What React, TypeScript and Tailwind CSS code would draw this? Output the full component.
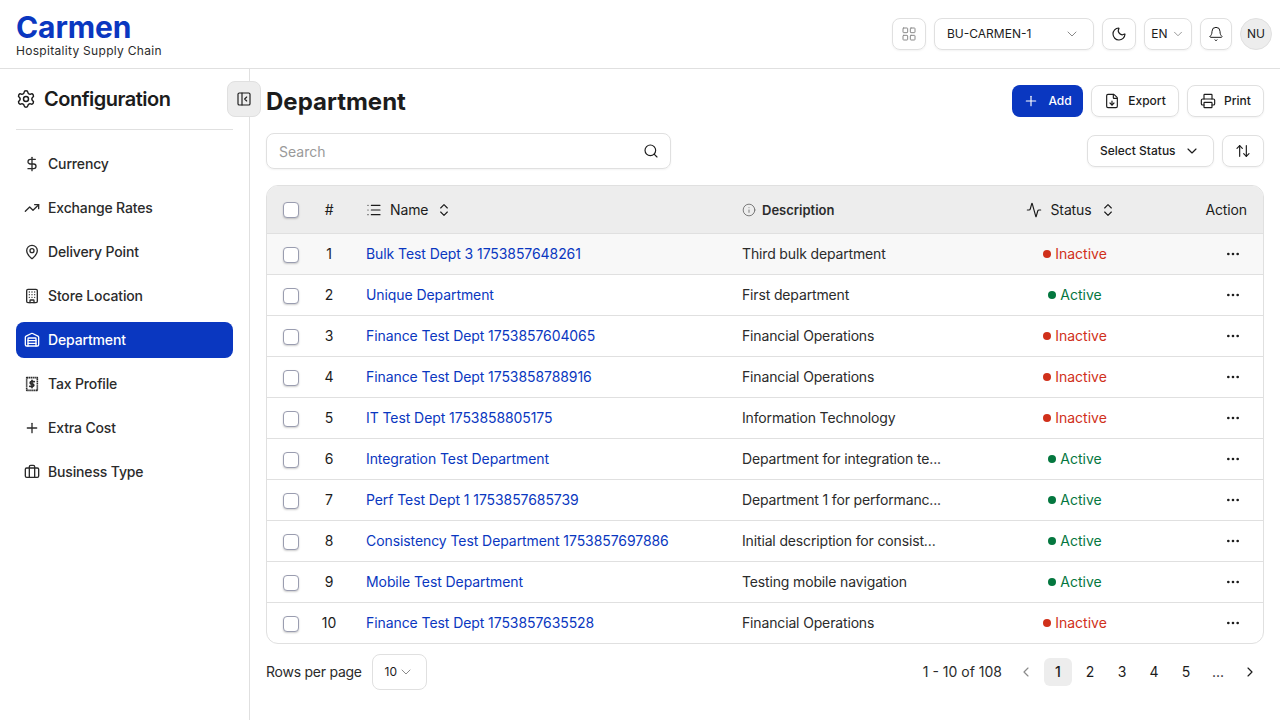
import {
  Activity,
  ArrowUpDown,
  Bell,
  Briefcase,
  Building,
  ChevronDown,
  ChevronLeft,
  ChevronRight,
  ChevronsUpDown,
  DollarSign,
  Ellipsis,
  FileDown,
  Info,
  LayoutGrid,
  List,
  MapPin,
  Moon,
  PanelLeftClose,
  Plus,
  Printer,
  Search,
  Settings,
  TrendingUp,
  Warehouse,
} from "lucide-react";

const TaxIcon = ({ className }: { className?: string }) => (
  <svg viewBox="0 0 24 24" fill="none" stroke="currentColor" strokeWidth="2.4" strokeLinejoin="round" className={className}>
    <path d="M4 2.5h16v19H4z" strokeDasharray="2.2 0.7" />
    <path d="M15.5 8.5H11a1.75 1.75 0 0 0 0 3.5h2a1.75 1.75 0 0 1 0 3.5H8.5" strokeLinecap="round" />
    <path d="M12 6.5v11" strokeLinecap="round" />
  </svg>
);

const navItems = [
  { label: "Currency", icon: DollarSign },
  { label: "Exchange Rates", icon: TrendingUp },
  { label: "Delivery Point", icon: MapPin },
  { label: "Store Location", icon: Building },
  { label: "Department", icon: Warehouse, active: true },
  { label: "Tax Profile", icon: TaxIcon },
  { label: "Extra Cost", icon: Plus },
  { label: "Business Type", icon: Briefcase },
];

const rows = [
  { name: "Bulk Test Dept 3 1753857648261", desc: "Third bulk department", active: false },
  { name: "Unique Department", desc: "First department", active: true },
  { name: "Finance Test Dept 1753857604065", desc: "Financial Operations", active: false },
  { name: "Finance Test Dept 1753858788916", desc: "Financial Operations", active: false },
  { name: "IT Test Dept 1753858805175", desc: "Information Technology", active: false },
  { name: "Integration Test Department", desc: "Department for integration te...", active: true },
  { name: "Perf Test Dept 1 1753857685739", desc: "Department 1 for performanc...", active: true },
  { name: "Consistency Test Department 1753857697886", desc: "Initial description for consist...", active: true },
  { name: "Mobile Test Department", desc: "Testing mobile navigation", active: true },
  { name: "Finance Test Dept 1753857635528", desc: "Financial Operations", active: false },
];

const Checkbox = () => (
  <span className="block h-4 w-4 translate-y-[1px] rounded-[4px] border border-[#9a9db0] bg-white shadow-[0_1px_2px_rgba(0,0,0,0.2)]" />
);

export default function App() {
  return (
    <div className="flex h-[720px] w-[1280px] flex-col overflow-hidden bg-white font-['Inter',sans-serif] text-[#1c1c1c]">
      <header className="flex h-[69px] shrink-0 items-center justify-between border-b border-[#e0e0e0] pl-4 pr-2">
        <div className="mt-[2px]">
          <div className="text-[30px] leading-[30px] font-bold tracking-[-0.1px] text-[#0a37c0]">Carmen</div>
          <div className="mt-[1px] text-xs leading-4 tracking-[0.3px] text-[#2b2b2b]">Hospitality Supply Chain</div>
        </div>
        <div className="flex items-center gap-2">
          <button className="flex h-8 w-[34px] items-center justify-center rounded-lg border border-[#e0e0e0] shadow-[0_1px_2px_rgba(0,0,0,0.05)]">
            <LayoutGrid className="h-4 w-4 text-[#8a8a8a]" strokeWidth={1.5} />
          </button>
          <button className="flex h-8 w-[160px] items-center justify-between rounded-lg border border-[#e0e0e0] pl-3 pr-[13px] text-xs shadow-[0_1px_2px_rgba(0,0,0,0.05)]">
            BU-CARMEN-1
            <ChevronDown className="h-4 w-4 text-[#8a8a8a]" strokeWidth={1.5} />
          </button>
          <button className="flex h-8 w-[34px] items-center justify-center rounded-lg border border-[#e0e0e0] shadow-[0_1px_2px_rgba(0,0,0,0.05)]">
            <Moon className="h-4 w-4" strokeWidth={1.75} />
          </button>
          <button className="flex h-8 w-12 items-center justify-center gap-[3px] rounded-lg border border-[#e0e0e0] text-xs shadow-[0_1px_2px_rgba(0,0,0,0.05)]">
            EN
            <ChevronDown className="h-3.5 w-3.5 text-[#8a8a8a]" strokeWidth={1.5} />
          </button>
          <button className="flex h-8 w-8 items-center justify-center rounded-lg border border-[#e0e0e0] shadow-[0_1px_2px_rgba(0,0,0,0.05)]">
            <Bell className="h-4 w-4" strokeWidth={1.5} />
          </button>
          <div className="flex h-8 w-8 items-center justify-center rounded-full border border-[#e0e0e0] bg-[#ededed] text-xs">NU</div>
        </div>
      </header>

      <div className="flex min-h-0 flex-1">
        <aside className="relative w-[250px] shrink-0 border-r border-[#e0e0e0] px-4">
          <div className="flex h-[61px] items-center gap-2 border-b border-[#e0e0e0]">
            <Settings className="mt-[-1px] h-5 w-5" strokeWidth={1.75} />
            <span className="text-xl font-semibold tracking-[-0.5px]">Configuration</span>
          </div>
          <nav className="mt-4 flex flex-col gap-2">
            {navItems.map((item) => (
              <a
                key={item.label}
                className={`flex h-9 items-center gap-2 rounded-lg px-2 text-sm font-medium tracking-[-0.15px] ${item.active ? "bg-[#0a37c0] text-white" : "text-[#2b2b2b]"}`}
              >
                <item.icon className="h-4 w-4" strokeWidth={2} />
                {item.label}
              </a>
            ))}
          </nav>
          <button className="absolute top-3 -right-3 flex h-9 w-[34px] items-center justify-center rounded-lg border border-[#e0e0e0] bg-[#ededed]">
            <PanelLeftClose className="h-4 w-4" strokeWidth={1.75} />
          </button>
        </aside>

        <main className="min-w-0 flex-1 px-4 pt-4">
          <div className="flex h-8 items-center justify-between">
            <h1 className="pt-[2px] text-2xl font-bold">Department</h1>
            <div className="flex items-center gap-2">
              <button className="flex h-8 w-[71px] items-center justify-center gap-[6px] rounded-lg bg-[#0a37c0] text-xs font-medium text-white">
                <Plus className="h-4 w-4" strokeWidth={1.75} />
                <span className="ml-[3px]">Add</span>
              </button>
              <button className="flex h-8 w-[88px] items-center justify-center gap-2 rounded-lg border border-[#e0e0e0] text-xs font-medium shadow-[0_1px_2px_rgba(0,0,0,0.05)]">
                <FileDown className="h-4 w-4" strokeWidth={1.75} />
                Export
              </button>
              <button className="flex h-8 w-[77px] items-center justify-center gap-2 rounded-lg border border-[#e0e0e0] text-xs font-medium shadow-[0_1px_2px_rgba(0,0,0,0.05)]">
                <Printer className="h-4 w-4" strokeWidth={1.75} />
                Print
              </button>
            </div>
          </div>

          <div className="mt-4 flex items-center justify-between">
            <div className="flex h-9 w-[405px] items-center justify-between rounded-lg border border-[#e0e0e0] pl-3 pr-[11px] shadow-[0_1px_2px_rgba(0,0,0,0.05)]">
              <span className="pt-[1px] text-sm text-[#9a9a9a]">Search</span>
              <Search className="h-4 w-4" strokeWidth={1.75} />
            </div>
            <div className="flex items-center gap-2">
              <button className="flex h-8 w-[127px] items-center justify-between rounded-lg border border-[#e0e0e0] pl-3 pr-[13px] text-xs font-medium shadow-[0_1px_2px_rgba(0,0,0,0.05)]">
                Select Status
                <ChevronDown className="h-4 w-4" strokeWidth={1.75} />
              </button>
              <button className="flex h-8 w-[42px] items-center justify-center rounded-lg border border-[#e0e0e0] shadow-[0_1px_2px_rgba(0,0,0,0.05)]">
                <ArrowUpDown className="h-4 w-4" strokeWidth={1.75} />
              </button>
            </div>
          </div>

          <div className="mt-4 overflow-hidden rounded-xl border border-[#e0e0e0]">
            <table className="w-full table-fixed border-collapse text-sm tracking-[-0.12px]">
              <colgroup>
                <col className="w-[42px]" />
                <col className="w-[40px]" />
                <col className="w-[376px]" />
                <col className="w-[275px]" />
                <col className="w-[150px]" />
                <col />
              </colgroup>
              <thead>
                <tr className="h-[47px] border-b border-[#e0e0e0] bg-[#ededed] font-normal">
                  <th className="pl-4 font-normal"><Checkbox /></th>
                  <th className="pt-[2px] font-normal">#</th>
                  <th className="pl-[17px] pt-[2px] text-left font-normal">
                    <div className="flex items-center">
                      <List className="h-4 w-4" strokeWidth={1.75} />
                      <span className="ml-2">Name</span>
                      <ChevronsUpDown className="ml-[8px] h-4 w-4" strokeWidth={1.75} />
                    </div>
                  </th>
                  <th className="pl-[17px] pt-[2px] text-left">
                    <div className="flex items-center gap-1.5 text-[13px] font-semibold tracking-normal text-[#2b2b2b]">
                      <Info className="h-3.5 w-3.5 text-[#6b6b6b]" strokeWidth={1.5} />
                      Description
                    </div>
                  </th>
                  <th className="pr-[8px] pt-[2px] font-normal">
                    <div className="flex items-center justify-center">
                      <Activity className="h-4 w-4" strokeWidth={1.75} />
                      <span className="ml-2">Status</span>
                      <ChevronsUpDown className="ml-2 h-4 w-4" strokeWidth={1.75} />
                    </div>
                  </th>
                  <th className="pr-4 pt-[2px] text-right font-normal">Action</th>
                </tr>
              </thead>
              <tbody>
                {rows.map((row, i) => (
                  <tr key={i} className={`h-[41px] ${i < rows.length - 1 ? "border-b border-[#e0e0e0]" : ""} ${i === 0 ? "bg-[#f8f8f8]" : ""}`}>
                    <td className="pl-4"><Checkbox /></td>
                    <td className="text-center">{i + 1}</td>
                    <td className="truncate pl-[17px] tracking-[-0.08px] text-[#0a37c0]">{row.name}</td>
                    <td className="truncate pl-[17px] tracking-[-0.15px] text-[#2b2b2b]">{row.desc}</td>
                    <td>
                      <div className={`flex items-center justify-center gap-1 tracking-normal ${row.active ? "text-[#04773f]" : "text-[#d0301a]"}`}>
                        <span className={`h-2 w-2 rounded-full ${row.active ? "bg-[#04773f]" : "bg-[#d0301a]"}`} />
                        {row.active ? "Active" : "Inactive"}
                      </div>
                    </td>
                    <td className="pr-[22px]">
                      <div className="flex justify-end">
                        <Ellipsis className="h-4 w-4" strokeWidth={2} />
                      </div>
                    </td>
                  </tr>
                ))}
              </tbody>
            </table>
          </div>

          <div className="mt-[10px] flex items-center justify-between text-sm">
            <div className="flex items-center gap-[10px]">
              <span className="tracking-[-0.25px] text-[#2b2b2b]">Rows per page</span>
              <button className="flex h-9 w-[55px] items-center justify-center gap-[1px] rounded-lg border border-[#e0e0e0] text-xs">
                10
                <ChevronDown className="h-4 w-4 text-[#8a8a8a]" strokeWidth={1.5} />
              </button>
            </div>
            <div className="flex items-center">
              <span className="mr-[10px] text-[#2b2b2b]">1 - 10 of 108</span>
              <span className="flex h-7 w-7 items-center justify-center text-[#8a8a8a]"><ChevronLeft className="h-4 w-4" strokeWidth={1.75} /></span>
              <span className="ml-1 flex h-7 w-7 items-center justify-center rounded-md bg-[#ededed] font-medium">1</span>
              {["2", "3", "4", "5", "..."].map((p) => (
                <span key={p} className="ml-1 flex h-7 w-7 items-center justify-center">{p}</span>
              ))}
              <span className="ml-1 flex h-7 w-7 items-center justify-center"><ChevronRight className="h-4 w-4" strokeWidth={1.75} /></span>
            </div>
          </div>
        </main>
      </div>
    </div>
  );
}
